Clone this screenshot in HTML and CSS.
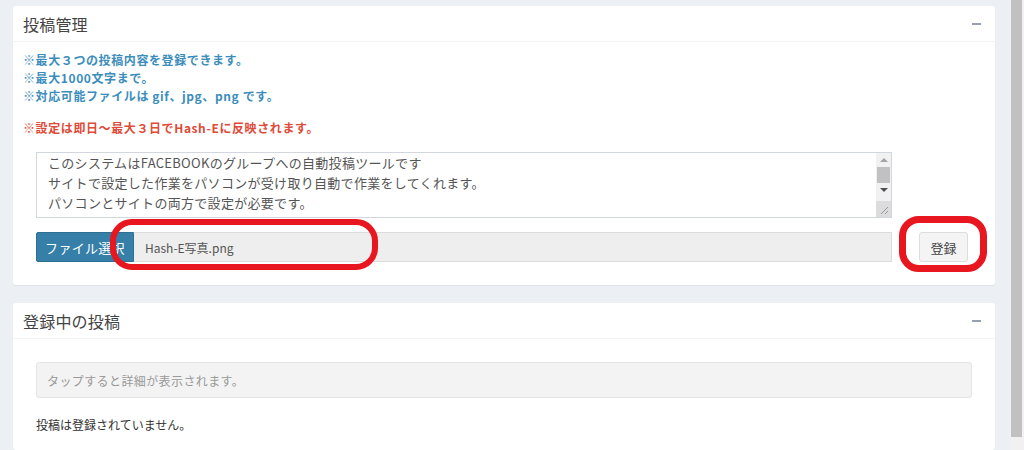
FILE: index.html
```html
<!DOCTYPE html>
<html lang="ja">
<head>
<meta charset="utf-8">
<title>投稿管理</title>
<link rel="stylesheet" href="styles.css">
</head>
<body>
<div class="page">
  <main class="content">
    <section class="box">
      <header class="box-header">
        <h3 class="box-title">投稿管理</h3>
        <span class="box-tool"></span>
      </header>
      <div class="box-body">
        <p class="note note-blue">※最大３つの投稿内容を登録できます。<br>※最大1000文字まで。<br>※対応可能ファイルは gif、jpg、png です。</p>
        <p class="note note-red">※設定は即日～最大３日でHash-Eに反映されます。</p>
        <div class="form-row">
          <div class="form-main">
            <div class="textarea">
              <div class="textarea-text">このシステムはFACEBOOKのグループへの自動投稿ツールです<br>サイトで設定した作業をパソコンが受け取り自動で作業をしてくれます。<br>パソコンとサイトの両方で設定が必要です。</div>
              <div class="ta-scroll">
                <span class="ta-arrow ta-up"></span>
                <span class="ta-thumb"></span>
                <span class="ta-arrow ta-down"></span>
                <span class="ta-corner">
                  <svg width="10" height="10" viewBox="0 0 10 10"><path d="M9 2 L2 9 M9 6 L6 9" stroke="#999" stroke-width="1" fill="none"/></svg>
                </span>
              </div>
            </div>
            <div class="file-row">
              <span class="file-btn">ファイル選択</span>
              <span class="file-name">Hash-E写真.png</span>
            </div>
          </div>
          <div class="form-side">
            <span class="btn-default">登録</span>
          </div>
        </div>
      </div>
      <span class="mark mark-file"></span>
      <span class="mark mark-btn"></span>
    </section>

    <section class="box box-second">
      <header class="box-header">
        <h3 class="box-title">登録中の投稿</h3>
        <span class="box-tool"></span>
      </header>
      <div class="box-body box-body-list">
        <div class="info">タップすると詳細が表示されます。</div>
        <p class="empty">投稿は登録されていません。</p>
      </div>
    </section>
  </main>
  <div class="scrollbar"><div class="scroll-thumb"></div></div>
</div>
</body>
</html>
```

FILE: styles.css
```css
* { box-sizing: border-box; }
html, body { margin: 0; padding: 0; }
body {
  background: #ecf0f5;
  font-family: "Noto Sans CJK JP", "Noto Sans", "Liberation Sans", sans-serif;
  color: #333;
  height: 450px;
  overflow: hidden;
}
.page {
  display: flex;
  height: 450px;
}
.content {
  flex: 1;
  padding: 6px 15px 0 13px;
  display: flex;
  flex-direction: column;
  gap: 18px;
}
.scrollbar {
  width: 14px;
  background: #f1f1f1;
  padding: 0 2px 0 1px;
}
.scroll-thumb {
  height: 437px;
  background: #c1c1c1;
}
.box {
  position: relative;
  background: #fff;
  border-radius: 3px;
  box-shadow: 0 1px 1px rgba(0,0,0,0.06);
}
.box-header {
  height: 36px;
  border-bottom: 1px solid #f4f4f4;
  display: flex;
  align-items: center;
  justify-content: space-between;
  padding: 0 14px 0 10px;
}
.box-title {
  margin: 0;
  font-size: 16px;
  font-weight: normal;
  color: #444;
  line-height: 20px;
  letter-spacing: 0.2px;
}
.box-tool {
  width: 9px;
  height: 2px;
  background: #97a0b3;
  margin-top: 1px;
}
.box-body {
  padding: 9px 27px 23px 10px;
}
.note {
  margin: 0;
  font-size: 12px;
  font-weight: bold;
  line-height: 18px;
  letter-spacing: 0.6px;
}
.note-blue { color: #3c8dbc; }
.note-red { color: #dd4b39; margin-top: 14px; }
.form-row {
  display: flex;
  margin-top: 15px;
  padding-left: 13px;
}
.form-main {
  width: 856px;
  display: flex;
  flex-direction: column;
  gap: 14px;
}
.form-side {
  flex: 1;
  display: flex;
  align-items: flex-end;
  justify-content: flex-end;
}
.textarea {
  height: 66px;
  border: 1px solid #d2d6de;
  display: flex;
  background: #fff;
}
.textarea-text {
  flex: 1;
  padding: 0 11px;
  font-size: 13px;
  line-height: 20px;
  color: #555;
  overflow: hidden;
  white-space: nowrap;
  letter-spacing: 0.3px;
}
.ta-scroll {
  width: 15px;
  display: flex;
  flex-direction: column;
  align-items: center;
  background: #f1f1f1;
}
.ta-arrow {
  width: 0; height: 0;
  border-left: 4px solid transparent;
  border-right: 4px solid transparent;
  margin: 5px 0;
}
.ta-up { border-bottom: 4px solid #a3a3a3; margin-top: 5px; }
.ta-down { border-top: 4px solid #505050; margin: 5px 0 4px; }
.ta-thumb {
  width: 13px;
  height: 16px;
  background: #c1c1c1;
}
.ta-corner {
  margin-top: auto;
  width: 15px;
  height: 16px;
  background: #dcdcdc;
  display: flex;
  align-items: flex-end;
  justify-content: flex-end;
  padding: 0 2px 2px 0;
}
.ta-corner svg { display: block; }
.file-row {
  display: flex;
  height: 30px;
}
.file-btn {
  width: 98px;
  background: #367fa9;
  border: 1px solid #2e6f94;
  color: #fff;
  font-size: 13px;
  display: flex;
  align-items: center;
  justify-content: center;
  border-radius: 2px 0 0 2px;
  letter-spacing: 0.3px;
}
.file-name {
  flex: 1;
  background: #eee;
  border: 1px solid #dcdcdc;
  border-left: none;
  font-size: 12px;
  color: #555;
  display: flex;
  align-items: center;
  padding-left: 11px;
}
.btn-default {
  width: 49px;
  height: 30px;
  background: #f4f4f4;
  border: 1px solid #ddd;
  border-radius: 3px;
  font-size: 13px;
  color: #444;
  display: flex;
  align-items: center;
  justify-content: center;
}
.mark {
  position: absolute;
  border: 6px solid #e8161e;
  border-radius: 22px;
}
.mark-file {
  left: 97px;
  top: 213px;
  width: 268px;
  height: 51px;
}
.mark-btn {
  left: 886px;
  top: 210px;
  width: 88px;
  height: 56px;
  border-width: 7px;
  border-radius: 20px;
}
.box-second { flex: 1; }
.box-body-list {
  padding: 23px 23px 0 23px;
}
.info {
  height: 36px;
  background: #f3f3f3;
  border: 1px solid #e6e6e6;
  border-radius: 3px;
  font-size: 12px;
  color: #999;
  display: flex;
  align-items: center;
  padding-left: 10px;
  letter-spacing: 0.4px;
}
.empty {
  margin: 18px 0 0;
  font-size: 12px;
  color: #333;
  line-height: 18px;
}
```
